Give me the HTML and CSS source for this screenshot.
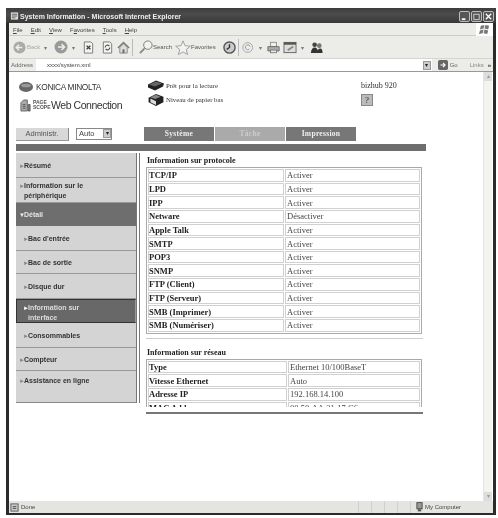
FILE: index.html
```html
<!DOCTYPE html>
<html lang="fr">
<head>
<meta charset="utf-8">
<title>System Information</title>
<link rel="stylesheet" href="styles.css">
</head>
<body>
<div class="window">
  <div class="titlebar">
    <svg class="title-icon" viewBox="0 0 10 10"><rect x="1" y="1" width="8" height="8" fill="#ddd"/><path d="M2 3h6M2 5h6M2 7h4" stroke="#555"/></svg>
    <span class="title-text">System Information - Microsoft Internet Explorer</span>
    <div class="winbtns">
      <span class="winbtn"><svg viewBox="0 0 10 10"><path d="M2 8h4" stroke="#fff" stroke-width="2"/></svg></span>
      <span class="winbtn"><svg viewBox="0 0 10 10"><path d="M2 2.500h6v6h-6z" fill="none" stroke="#ddd"/></svg></span>
      <span class="winbtn close"><svg viewBox="0 0 10 10"><path d="M2 2l6 6M8 2l-6 6" stroke="#fff" stroke-width="1.500"/></svg></span>
    </div>
  </div>
  <div class="menubar">
    <div class="menus"><span><u>F</u>ile</span><span><u>E</u>dit</span><span><u>V</u>iew</span><span>F<u>a</u>vorites</span><span><u>T</u>ools</span><span><u>H</u>elp</span></div>
    <div class="flag"><svg viewBox="0 0 14 12"><path d="M3 2l4-1-1 4-4 1zM8 1l4 1-1 4-4-1zM2 7l4-1-1 4-4 1zM7 6l4 1-1 4-4-1z" fill="#777"/></svg></div>
  </div>
  <div class="toolbar">
    <svg class="tb-round" viewBox="0 0 14 14"><circle cx="7" cy="7" r="6.500" fill="#aaa"/><path d="M10 7H4M6.500 4L3.500 7l3 3" stroke="#eee" stroke-width="1.500" fill="none"/></svg>
    <span class="tb-label back">Back</span><span class="tb-caret">▾</span>
    <svg class="tb-round next" viewBox="0 0 14 14"><circle cx="7" cy="7" r="6.500" fill="#999"/><path d="M4 7h6M7.500 4l3 3-3 3" stroke="#eee" stroke-width="1.500" fill="none"/></svg>
    <span class="tb-caret">▾</span>
    <svg class="tb-icon m-doc" viewBox="0 0 14 14"><path d="M2.500 1h7l2 2v10h-9z" fill="#f4f4f4" stroke="#777"/><path d="M5 5l4 4M9 5l-4 4" stroke="#444" stroke-width="1.500"/></svg>
    <svg class="tb-icon m-refresh" viewBox="0 0 14 14"><path d="M2.500 1h7l2 2v10h-9z" fill="#f4f4f4" stroke="#777"/><path d="M4.500 7a2.500 2.500 0 0 1 4.500-1.500M9.500 7a2.500 2.500 0 0 1-4.500 1.500" stroke="#555" fill="none" stroke-width="1.200"/></svg>
    <svg class="tb-icon m-home" viewBox="0 0 14 14"><path d="M1 7.500L7 1.500l6 6" fill="none" stroke="#777" stroke-width="1.500"/><path d="M3 7v6h8V7L7 3z" fill="#ddd" stroke="#888"/><rect x="6" y="9" width="2" height="4" fill="#666"/></svg>
    <span class="tb-sep"></span>
    <svg class="tb-icon wide" viewBox="0 0 15 15"><circle cx="9.500" cy="5.500" r="4.500" fill="#f2f2f2" stroke="#777"/><path d="M6 9l-5 5" stroke="#888" stroke-width="2"/></svg>
    <span class="tb-label search">Search</span>
    <svg class="tb-icon star" viewBox="0 0 18 17"><path d="M9 1l2.300 5.500 6 .5-4.600 3.800 1.500 5.700L9 13.500 3.800 16.500l1.500-5.700L.7 7l6-.5z" fill="#f2f2f2" stroke="#999"/></svg>
    <span class="tb-label fav">Favorites</span>
    <svg class="tb-icon hist" viewBox="0 0 14 14"><circle cx="7" cy="7" r="6" fill="#ccc" stroke="#555" stroke-width="1.500"/><path d="M7 3.500V7l-3 2" stroke="#333" stroke-width="1.500" fill="none"/></svg>
    <span class="tb-sep"></span>
    <svg class="tb-icon mail" viewBox="0 0 16 14"><circle cx="7" cy="7" r="6" fill="#eee" stroke="#999"/><path d="M10 6a3 3 0 1 0-1 3" stroke="#888" fill="none"/></svg>
    <span class="tb-caret">▾</span>
    <svg class="tb-icon print" viewBox="0 0 15 14"><rect x="4" y="1" width="7" height="5" fill="#eee" stroke="#888"/><path d="M1 6h13v5H1z" fill="#aaa" stroke="#666"/><rect x="4" y="10" width="7" height="3" fill="#eee" stroke="#777"/></svg>
    <svg class="tb-icon doc" viewBox="0 0 15 14"><rect x="1" y="1.500" width="13" height="11" fill="#ddd" stroke="#666"/><rect x="1" y="1.500" width="13" height="2.500" fill="#555"/><path d="M5 10l6-4" stroke="#888" stroke-width="2"/></svg>
    <span class="tb-caret">▾</span>
    <svg class="tb-icon msg" viewBox="0 0 14 14"><circle cx="5" cy="4" r="2.500" fill="#444"/><circle cx="10" cy="5" r="2.500" fill="#777"/><path d="M1 13c0-4 2-6 4-6s4 2 4 6zM8 13c0-3 1-5 3-5s2.500 2 2.500 5z" fill="#333"/></svg>
  </div>
  <div class="addressbar">
    <span class="addr-label">Address</span>
    <div class="addr-field">
      <span>xxxx/system.xml</span>
      <span class="combo-btn small">▾</span>
    </div>
    <svg class="go-icon" viewBox="0 0 12 12"><rect width="12" height="12" rx="2" fill="#666"/><path d="M3 6h5M6 3.500L8.500 6 6 8.500" stroke="#fff" fill="none" stroke-width="1.300"/></svg>
    <span class="go-label">Go</span>
    <span class="links">Links</span>
    <span class="chev">»</span>
  </div>
  <div class="viewport">
    <div class="page">
      <header class="head">
        <div class="brand">
          <div class="konica">
            <svg viewBox="0 0 14 10"><ellipse cx="7" cy="5" rx="7" ry="5" fill="#666"/><ellipse cx="7" cy="3.500" rx="5" ry="1.800" fill="#999"/></svg>
            <span>KONICA MINOLTA</span>
          </div>
          <div class="pagescope">
            <svg viewBox="0 0 12 14"><path d="M1 13V4l3-3h4v12z" fill="#aaa" stroke="#666"/><path d="M3 6h3M3 8h3M3 10h3M9 6h2v7H9z" stroke="#555" fill="#888"/></svg>
            <span class="ps-small">PAGE<br>SCOPE</span>
            <span class="ps-web">Web Connection</span>
          </div>
        </div>
        <div class="status">
          <div class="status-row">
            <svg viewBox="0 0 18 12"><path d="M1 5l8-4 8 3-1 3-8 4-7-3z" fill="#222"/><path d="M2 5l7-3 6 2-7 3z" fill="#666"/></svg>
            <span>Prêt pour la lecture</span>
          </div>
          <div class="status-row">
            <svg viewBox="0 0 18 14"><path d="M1 5l8-4 8 3v6l-8 4-8-4z" fill="#222"/><path d="M3 6l6 3v4l-6-3z" fill="#ddd"/><path d="M3 4.500l6-2.500 5 2-6 2.500z" fill="#888"/></svg>
            <span>Niveau de papier bas</span>
          </div>
        </div>
        <div class="device">
          <span>bizhub 920</span>
          <span class="help">?</span>
        </div>
      </header>
      <nav class="tabline">
        <span class="admin">Administr.</span>
        <span class="select">Auto<span class="combo-btn">▾</span></span>
        <div class="tabs">
          <span class="tab active">Système</span>
          <span class="tab light">Tâche</span>
          <span class="tab active">Impression</span>
        </div>
      </nav>
      <div class="graybar"></div>
      <div class="columns">
        <aside class="sidebar">
          <div class="item h25"><i>►</i>Résumé</div>
          <div class="item h25 two"><i>►</i>Information sur le<br><b>périphérique</b></div>
          <div class="item detail"><i>▼</i>Détail</div>
          <div class="item sub h25"><i>►</i>Bac d'entrée</div>
          <div class="item sub h23"><i>►</i>Bac de sortie</div>
          <div class="item sub h25"><i>►</i>Disque dur</div>
          <div class="item sub current"><i>►</i>Information sur<br><b>interface</b></div>
          <div class="item sub h25"><i>►</i>Consommables</div>
          <div class="item h23"><i>►</i>Compteur</div>
          <div class="item last"><i>►</i>Assistance en ligne</div>
        </aside>
        <main class="content">
          <h2>Information sur protocole</h2>
          <table class="grid proto">
            <tr><th>TCP/IP</th><td>Activer</td></tr>
            <tr><th>LPD</th><td>Activer</td></tr>
            <tr><th>IPP</th><td>Activer</td></tr>
            <tr><th>Netware</th><td>Désactiver</td></tr>
            <tr><th>Apple Talk</th><td>Activer</td></tr>
            <tr><th>SMTP</th><td>Activer</td></tr>
            <tr><th>POP3</th><td>Activer</td></tr>
            <tr><th>SNMP</th><td>Activer</td></tr>
            <tr><th>FTP (Client)</th><td>Activer</td></tr>
            <tr><th>FTP (Serveur)</th><td>Activer</td></tr>
            <tr><th>SMB (Imprimer)</th><td>Activer</td></tr>
            <tr><th>SMB (Numériser)</th><td>Activer</td></tr>
          </table>
          <div class="rule"></div>
          <h2 class="second">Information sur réseau</h2>
          <div class="clip">
            <table class="grid net">
              <tr><th>Type</th><td>Ethernet 10/100BaseT</td></tr>
              <tr><th>Vitesse Ethernet</th><td>Auto</td></tr>
              <tr><th>Adresse IP</th><td>192.168.14.100</td></tr>
              <tr><th>MAC Address</th><td>00:50:AA:21:17:C6</td></tr>
            </table>
          </div>
          <div class="darkrule"></div>
        </main>
      </div>
    </div>
    <div class="scrollbar">
      <span class="sb-btn">▴</span>
      <span class="sb-btn">▾</span>
    </div>
  </div>
  <div class="statusbar">
    <svg viewBox="0 0 10 10"><rect x="1" y="1" width="8" height="8" fill="#ccc" stroke="#555"/><path d="M3 4h4M3 6h4" stroke="#444"/></svg>
    <span class="st-done">Done</span>
    <span class="st-cells"></span>
    <svg class="st-pc" viewBox="0 0 8 11"><rect x="1" y="0.500" width="6" height="7" fill="#999" stroke="#444"/><rect x="2" y="8" width="4" height="2.500" fill="#555"/></svg>
    <span class="st-zone">My Computer</span>
  </div>
</div>
</body>
</html>
```
FILE: styles.css
```css
* { box-sizing: border-box; }
html, body { margin: 0; height: 100%; background: #fff; overflow: hidden; }
body { padding: 8px 2px 3px 6px; font-family: "Liberation Sans", Arial, sans-serif; color: #222; }
svg { display: block; flex: none; }

.window { width: 490px; height: 507px; display: flex; flex-direction: column; background: #2b2b2b; padding: 0 3px 2px; filter: blur(.3px); }

.titlebar { height: 15px; margin: 0 -3px; padding: 1px 2px 0 4px; display: flex; align-items: center; gap: 1px; color: #eee; background: linear-gradient(#3c3c3c, #4c4c4c 40%, #383838); }
.title-icon { width: 9px; height: 10px; }
.title-text { font: bold 7px "Liberation Sans", sans-serif; white-space: nowrap; flex: 1; }
.winbtns { display: flex; gap: 1px; }
.winbtn { width: 11px; height: 11px; border: 1px solid #bbb; border-radius: 2px; background: #555; }
.winbtn svg { width: 9px; height: 9px; }

.menubar { height: 13px; background: #ebebe8; display: flex; align-items: center; justify-content: space-between; border-bottom: 1px solid #ccc; }
.menus { display: flex; gap: 8px; padding: 1px 0 0 4px; font-size: 6px; color: #444; }
.flag { width: 17px; height: 13px; background: #fff; padding: 1px 2px; }
.flag svg { width: 13px; height: 11px; }

.toolbar { height: 23px; background: #ecece9; display: flex; align-items: center; padding-left: 4px; border-bottom: 1px solid #d4d4d0; }
.tb-round { width: 13px; height: 13px; }
.tb-round.next { width: 14px; height: 14px; }
.tb-label { font-size: 6px; color: #555; white-space: nowrap; }
.tb-label.back { width: 13px; margin-left: 1px; color: #aaa; }
.tb-label.search { width: 19px; }
.tb-label.fav { width: 24px; }
.tb-caret { width: 6px; font-size: 6px; color: #777; margin: 0 4px 0 4px; overflow: hidden; }
.tb-icon { width: 13px; height: 13px; flex: none; }
.m-refresh { margin-left: 6px; }
.m-home { margin-left: 3px; }
.tb-sep { width: 1px; height: 17px; background: #bbb; margin-left: 2px; }
.tb-icon.wide { width: 14px; height: 14px; margin-left: 6px; }
.tb-icon.star { width: 16px; height: 15px; margin-left: 3px; }
.tb-icon.hist { margin-left: 8px; }
.tb-icon.mail { margin-left: 3px; }
.tb-icon.print { margin-left: -2px; }
.tb-icon.doc { width: 14px; margin-left: 3px; }
.tb-icon.msg { margin-left: -1px; }

.addressbar { height: 12px; background: #ecece9; display: flex; align-items: center; font-size: 6px; color: #666; }
.addr-label { width: 27px; padding-left: 2px; }
.addr-field { flex: 1; height: 12px; background: #fff; display: flex; align-items: center; justify-content: space-between; padding-left: 11px; color: #444; }
.combo-btn { width: 8px; height: 9px; background: #ccc; border: 1px solid #999; font-size: 6px; line-height: 7px; text-align: center; color: #222; }
.combo-btn.small { margin-right: 1px; }
.go-icon { width: 10px; height: 10px; margin-left: 6px; }
.go-label { margin: 0 12px 0 2px; }
.links { color: #888; }
.chev { margin-left: 4px; padding-right: 2px; color: #333; font-weight: bold; }

.viewport { flex: 1; min-height: 0; background: #fff; display: flex; overflow: hidden; border-top: 1px solid #999; }
.page { flex: 1; min-width: 0; padding: 9px 0 0 7px; }
.scrollbar { width: 9px; margin-right: 1px; background: #f3f3f0; display: flex; flex-direction: column; justify-content: space-between; border-left: 1px solid #e4e4e4; }
.sb-btn { height: 9px; background: #ddd; font-size: 6px; line-height: 8px; text-align: center; color: #999; }

.head { height: 45px; display: flex; }
.brand { width: 131px; }
.konica { display: flex; align-items: center; gap: 3px; height: 11px; margin-left: 3px; font-size: 8.300px; letter-spacing: -.3px; color: #333; }
.konica svg { width: 14px; height: 10px; }
.pagescope { display: flex; align-items: center; gap: 2px; margin: 6px 0 0 4px; height: 14px; }
.pagescope svg { width: 11px; height: 13px; }
.ps-small { font: bold 5px/5px "Liberation Sans", sans-serif; color: #555; width: 16px; }
.ps-web { font-size: 10.500px; letter-spacing: -.45px; color: #333; white-space: nowrap; }
.status { width: 214px; margin-top: -2px; font: 6.800px "Liberation Serif", serif; color: #333; }
.status-row { display: flex; align-items: center; gap: 1px; height: 13px; }
.status-row + .status-row { margin-top: 1px; }
.status-row svg { width: 18px; height: 13px; }
.device { display: flex; flex-direction: column; gap: 4px; font: 8px "Liberation Serif", serif; color: #333; align-items: flex-start; }
.help { width: 12px; height: 12px; background: #bbb; border: 1px solid #888; font-size: 9px; line-height: 10px; text-align: center; color: #222; }

.tabline { height: 15px; display: flex; align-items: flex-end; }
.admin { width: 53px; height: 13px; background: #d8d8d8; border-right: 1px solid #888; border-bottom: 1px solid #999; font-size: 7.500px; line-height: 12px; text-align: center; color: #555; }
.select { width: 36px; height: 12px; margin: 0 0 1px 7px; border: 1px solid #888; background: #fff; font-size: 7.500px; line-height: 10px; padding-left: 2px; display: flex; justify-content: space-between; color: #444; }
.tabs { display: flex; gap: 1px; margin-left: 32px; height: 14px; }
.tab { width: 70px; font: bold 7.500px/14px "Liberation Serif", serif; letter-spacing: .3px; text-align: center; color: #f0f0f0; }
.tab.active { background: #777; }
.tab.light { background: #aaa; color: #ccc; }

.graybar { width: 410px; height: 7px; margin-top: 3px; background: #6e6e6e; }

.columns { display: flex; margin-top: 2px; }
.sidebar { width: 120px; height: 250px; flex: none; background: #d4d4d4; border-bottom: 1px solid #888; font: bold 7px/9px "Liberation Sans", sans-serif; color: #333; box-shadow: 1px 0 0 #777, 3px 0 0 #fff, 4px 0 0 #777; }
.sidebar b { padding-left: 5px; }
.sidebar i { display: inline-block; width: 5px; font-style: normal; font-weight: normal; font-size: 6px; color: #888; }
.item { padding-left: 3px; border-bottom: 1px solid #999; display: block; }
.item.h25 { height: 25px; padding-top: 8px; }
.item.h23 { height: 23px; padding-top: 7px; }
.item.two { padding-top: 3px; }
.item.sub { padding-left: 7px; }
.item.detail { height: 23px; padding: 7px 0 0 3px; background: #6e6e6e; color: #e4e4e4; border-bottom: 0; }
.item.detail i { color: #eee; }
.item.current { height: 24px; padding-top: 3px; background: #686868; color: #ddd; border: 1px solid #333; border-right-color: #999; padding-left: 6px; }
.item.current i { color: #fff; }
.item.last { height: 28px; padding-top: 5px; border-bottom: 0; }

.content { width: 289px; flex: none; padding: 3px 0 0 10px; font-family: "Liberation Serif", serif; color: #222; }
h2 { margin: 0; font: bold 8px/10px "Liberation Serif", serif; padding-left: 1px; }
.grid { width: 276px; table-layout: fixed; border-collapse: separate; border-spacing: 1px; background: #fff; border: 1px solid #aaa; font-size: 8.500px; }
.grid th { height: 12.650px; padding: 0; text-align: left; font-weight: bold; border: 1px solid #d0d0d0; overflow: hidden; white-space: nowrap; line-height: 10px; }
.grid td { padding: 0 1px; border: 1px solid #d0d0d0; color: #444; line-height: 10px; white-space: nowrap; }
.grid.proto th { width: 136px; }
.grid.net th { width: 139px; }
.proto { margin-top: 1px; }
.rule { width: 277px; height: 1px; background: #ccc; margin-top: 4px; }
h2.second { margin-top: 9px; }
.clip { margin-top: 1px; height: 48px; overflow: hidden; }
.darkrule { width: 277px; height: 2px; background: #777; margin-top: 5px; }

.statusbar { height: 12px; background: #e4e4e0; display: flex; align-items: center; padding-left: 1px; font-size: 6px; color: #444; }
.statusbar svg { width: 9px; height: 9px; }
.st-done { margin-left: 2px; width: 325px; }
.st-cells { width: 70px; height: 12px; background: repeating-linear-gradient(90deg, transparent 0 12px, #d0d0d0 12px 13px); }
.statusbar .st-pc { width: 7px; height: 10px; }
.st-zone { margin-left: 2px; }
```
